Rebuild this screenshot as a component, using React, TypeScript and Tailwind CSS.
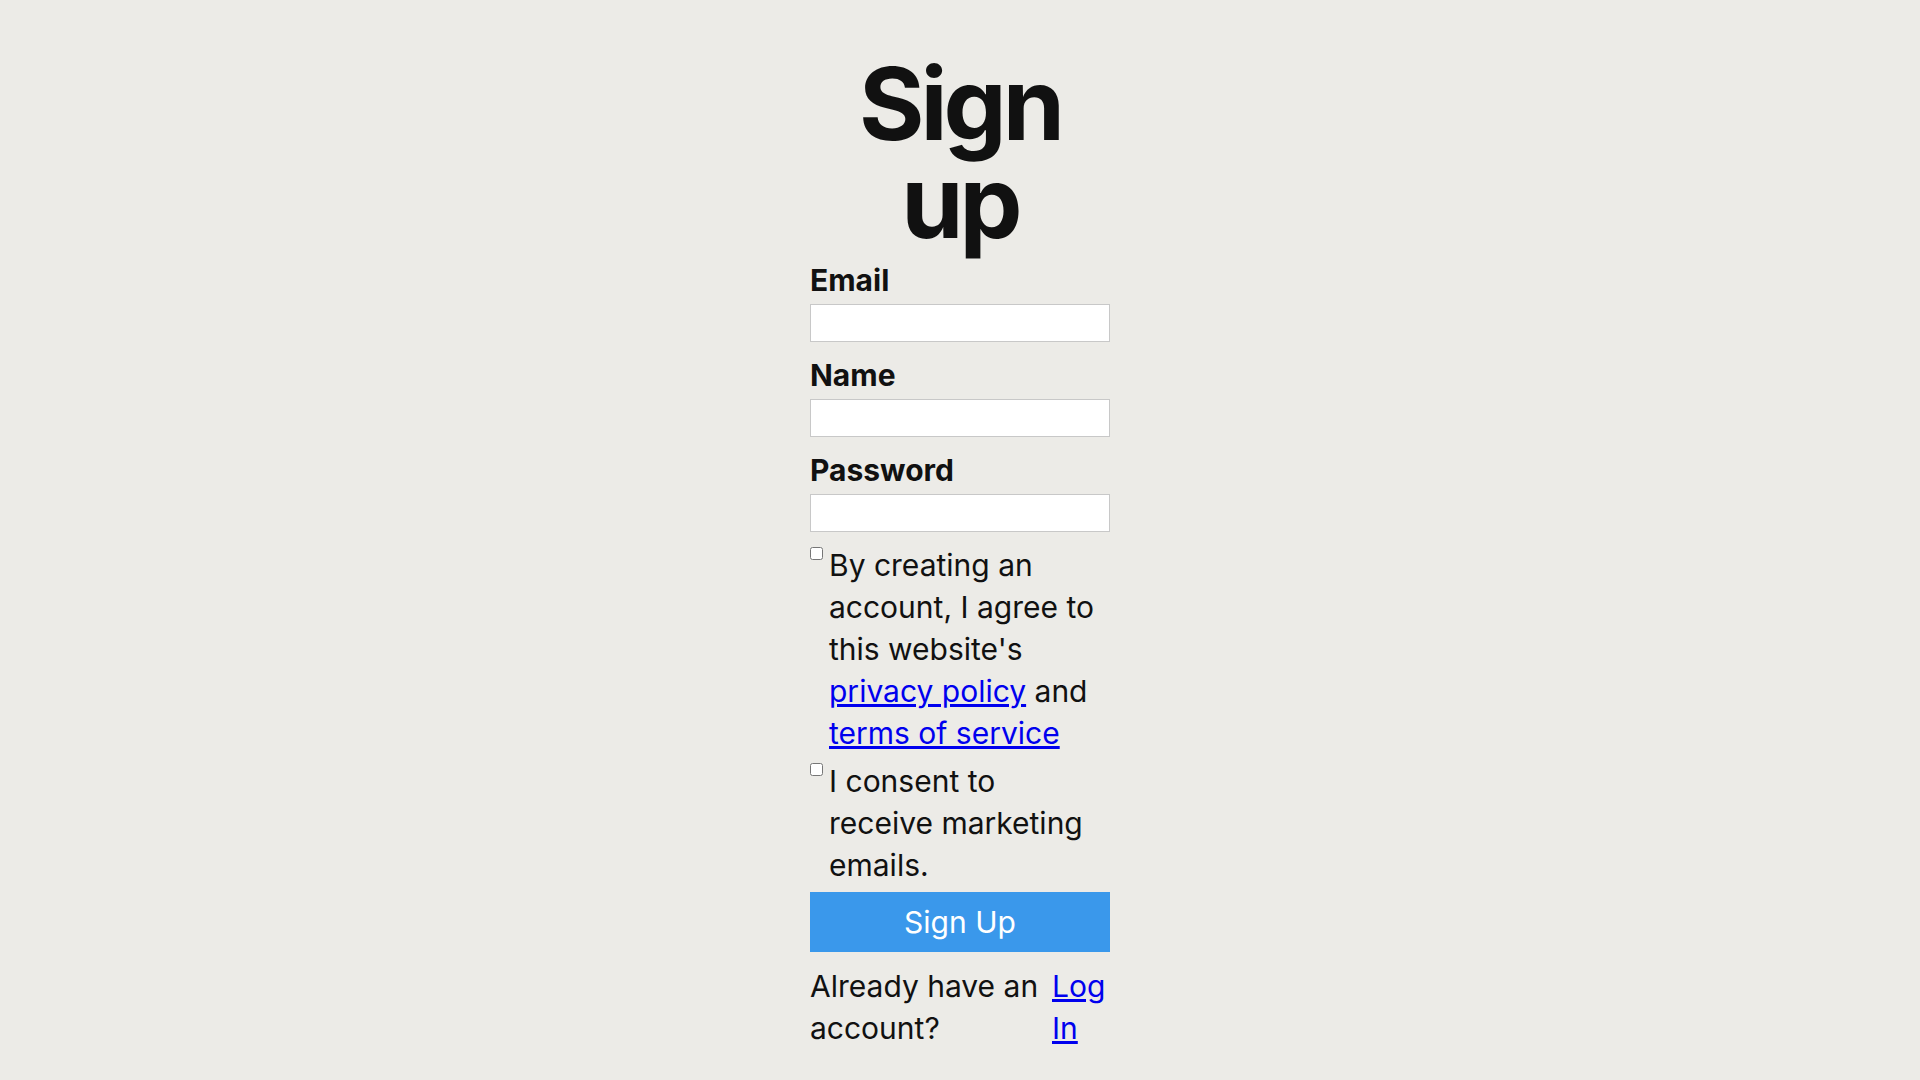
const font = "font-['Inter','Liberation_Sans',sans-serif]";

function Field({ label, type }: { label: string; type: string }) {
	return (
		<div className="mb-[12px]">
			<label className="block text-[30px] leading-[42px] font-bold">{label}</label>
			<input
				type={type}
				className="mt-[3px] block h-[38px] w-full border border-[#c8c8c8] bg-white px-2 text-[20px] outline-none"
			/>
		</div>
	);
}

function Check({ children, className }: { children: React.ReactNode; className?: string }) {
	return (
		<div className={"flex items-start " + (className ?? "")}>
			<input type="checkbox" className="mt-[3px] mr-[6px] h-[13px] w-[13px] shrink-0" />
			<p className="w-[270px] text-[30px] leading-[42px]">{children}</p>
		</div>
	);
}

export default function App() {
	return (
		<div className={`min-h-screen bg-[#ecebe7] text-[#111111] ${font}`}>
			<div className="mx-auto w-[300px] pt-[55px]">
				<h1 className="mb-[8px] text-center text-[100px] leading-[98px] font-bold tracking-[-0.04em]">
					Sign up
				</h1>

				<Field label="Email" type="email" />
				<Field label="Name" type="text" />
				<Field label="Password" type="password" />

				<Check>
					By creating an account, I agree to this website's{" "}
					<a href="#" className="text-[#0000ee] underline">
						privacy policy
					</a>{" "}
					and{" "}
					<a href="#" className="text-[#0000ee] underline">
						terms of service
					</a>
				</Check>
				<Check className="mt-[6px]">I consent to receive marketing emails.</Check>

				<button className="mt-[6px] block h-[60px] w-full bg-[#3a98eb] text-[30px] text-white">
					Sign Up
				</button>

				<div className="mt-[13px] flex text-[30px] leading-[42px]">
					<p className="flex-1">Already have an account?</p>
					<a href="#" className="w-[58px] text-[#0000ee] underline">
						Log In
					</a>
				</div>
			</div>
		</div>
	);
}
